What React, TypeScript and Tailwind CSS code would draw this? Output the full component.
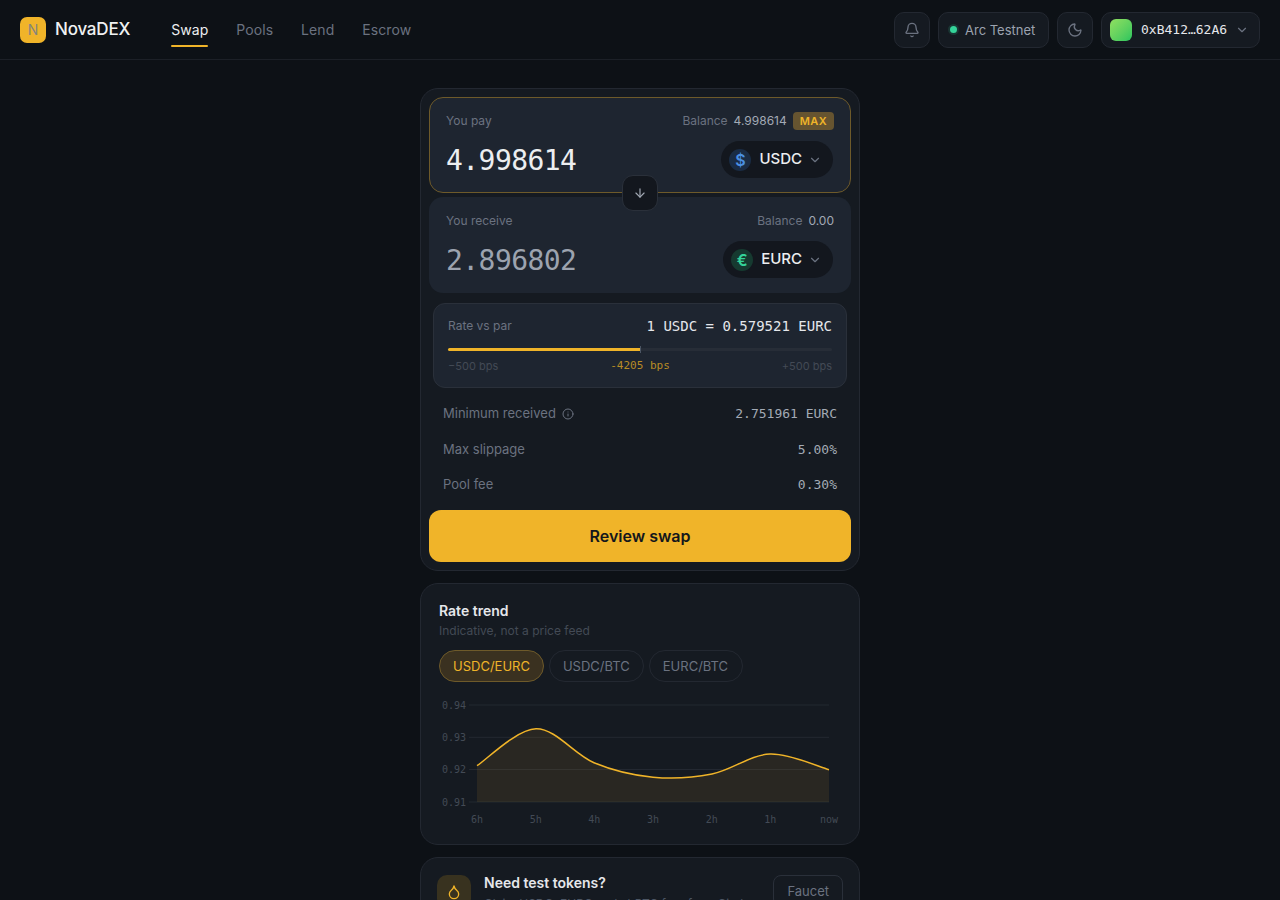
import { ArrowDown, Bell, ChevronDown, Droplet, Info, Moon } from "lucide-react";

const mono = "font-['DejaVu_Sans_Mono',monospace]";

const points: [number, number][] = [
  [38, 70.7],
  [97, 33.8],
  [155, 67.7],
  [214, 82.2],
  [273, 79],
  [331, 59],
  [390, 74.7],
];

function curve(pts: [number, number][]) {
  let d = `M${pts[0][0]},${pts[0][1]}`;
  for (let i = 0; i < pts.length - 1; i++) {
    const p0 = pts[i - 1] ?? pts[i];
    const p1 = pts[i];
    const p2 = pts[i + 1];
    const p3 = pts[i + 2] ?? p2;
    d += ` C${p1[0] + (p2[0] - p0[0]) / 6},${p1[1] + (p2[1] - p0[1]) / 6} ${p2[0] - (p3[0] - p1[0]) / 6},${p2[1] - (p3[1] - p1[1]) / 6} ${p2[0]},${p2[1]}`;
  }
  return d;
}

function Navbar() {
  return (
    <header className="h-[60px] flex items-center justify-between px-5 border-b border-[#1c2027]">
      <div className="flex items-center">
        <div className="w-[26px] h-[26px] rounded-[7px] bg-[#f0b429] flex items-center justify-center text-[14px] text-[#85847c]">
          N
        </div>
        <span className="ml-[9px] text-[17px] font-medium tracking-[-0.2px] text-[#f0f1f2]">NovaDEX</span>
        <nav className="ml-[41px] flex items-center gap-7 text-[14px] tracking-[0.07px] text-[#6b7280]">
          <a className="relative text-[#eceef0]">
            Swap
            <span className="absolute left-0 right-0 -bottom-[7px] h-[2px] rounded-full bg-[#f0b429]" />
          </a>
          <a>Pools</a>
          <a>Lend</a>
          <a>Escrow</a>
        </nav>
      </div>
      <div className="flex items-center gap-2">
        <button className="w-9 h-9 rounded-[10px] border border-[#232831] bg-[#151a21] flex items-center justify-center text-[#6b7280]">
          <Bell size={16} />
        </button>
        <div className="h-9 w-[111px] rounded-[10px] border border-[#232831] bg-[#151a21] flex items-center pl-[11px] text-[13px] leading-[20px] text-[#9ca3af]">
          <span className="w-[7px] h-[7px] rounded-full bg-[#34d399] ring-[2px] ring-[#34d399]/15" />
          <span className="ml-[8px]">Arc Testnet</span>
        </div>
        <button className="w-9 h-9 rounded-[10px] border border-[#232831] bg-[#151a21] flex items-center justify-center text-[#6b7280]">
          <Moon size={16} />
        </button>
        <div className="h-9 w-[159px] rounded-[10px] border border-[#232831] bg-[#151a21] flex items-center pl-2">
          <span className="w-[22px] h-[22px] rounded-[6px] bg-gradient-to-br from-[#8fe060] to-[#22c55e]" />
          <span className={`ml-[9px] text-[13px] text-[#e5e7eb] ${mono}`}>0xB412…62A6</span>
          <ChevronDown size={14} className="ml-[8px] text-[#6b7280]" />
        </div>
      </div>
    </header>
  );
}

function TokenPicker({ symbol, glyph, circle, text }: { symbol: string; glyph: string; circle: string; text: string }) {
  return (
    <div className="h-[37px] mr-px rounded-full bg-[#13171e] flex items-center pl-2 pr-[11px]">
      <span className={`w-[22px] h-[22px] rounded-full flex items-center justify-center text-[16px] font-semibold ${circle} ${text}`}>
        {glyph}
      </span>
      <span className="ml-2 text-[15px] font-medium text-[#eceef0]">{symbol}</span>
      <ChevronDown size={14} className="ml-[6px] text-[#6b7280]" />
    </div>
  );
}

function DetailRow({ label, value, info }: { label: string; value: string; info?: boolean }) {
  return (
    <div className="flex items-center justify-between">
      <span className="flex items-center gap-[6px] text-[13px] text-[#6b7280]">
        {label}
        {info && <Info size={12} />}
      </span>
      <span className={`text-[13px] text-[#a3aab5] ${mono}`}>{value}</span>
    </div>
  );
}

function SwapCard() {
  return (
    <section className="rounded-[18px] border border-[#232831] bg-[#151a21] p-2 h-[483px]">
      <div className="relative">
        <div className="h-[96px] rounded-[14px] border border-[#6e5a2a] bg-[#1e2530] px-4 pt-[14px]">
          <div className="flex items-center justify-between h-[18px]">
            <span className="text-[12px] text-[#6b7280]">You pay</span>
            <div className="flex items-center text-[12px]">
              <span className="text-[#6b7280]">Balance</span>
              <span className="ml-[6px] text-[#a3aab5]">4.998614</span>
              <span className="ml-[6px] h-[18px] px-[7px] rounded-[4px] bg-[#665430] text-[#f0b429] text-[11px] font-semibold tracking-[0.4px] flex items-center">
                MAX
              </span>
            </div>
          </div>
          <div className="flex items-center justify-between mt-[11px]">
            <span className={`text-[28px] leading-[37px] tracking-[-0.56px] translate-y-px text-[#eceef0] ${mono}`}>4.998614</span>
            <TokenPicker symbol="USDC" glyph="$" circle="bg-[#1a2c44]" text="text-[#4a90e2]" />
          </div>
        </div>
        <button className="absolute z-10 left-1/2 -translate-x-1/2 top-[78px] w-9 h-9 rounded-[11px] border border-[#2a303a] bg-[#13171e] flex items-center justify-center text-[#a3aab5]">
          <ArrowDown size={14} />
        </button>
        <div className="mt-1 h-[96px] rounded-[14px] bg-[#1e2530] px-[17px] pt-[15px]">
          <div className="flex items-center justify-between h-[18px]">
            <span className="text-[12px] text-[#6b7280]">You receive</span>
            <div className="flex items-center text-[12px]">
              <span className="text-[#6b7280]">Balance</span>
              <span className="ml-[6px] text-[#a3aab5]">0.00</span>
            </div>
          </div>
          <div className="flex items-center justify-between mt-[11px]">
            <span className={`text-[28px] leading-[37px] tracking-[-0.56px] translate-y-px text-[#9ca3af] ${mono}`}>2.896802</span>
            <TokenPicker symbol="EURC" glyph="€" circle="bg-[#163a30]" text="text-[#34d399]" />
          </div>
        </div>
      </div>

      <div className="mx-1 mt-[10px] h-[85px] rounded-[12px] border border-[#2a303a] bg-[#1e2530] px-[14px] pt-[12px]">
        <div className="flex items-center justify-between h-[20px]">
          <span className="text-[12px] leading-[20px] text-[#6b7280]">Rate vs par</span>
          <span className={`text-[14px] text-[#e5e7eb] ${mono}`}>1 USDC = 0.579521 EURC</span>
        </div>
        <div className="relative mt-[12px] h-[3px] rounded-full bg-[#272d37]">
          <div className="h-[3px] w-1/2 rounded-l-full bg-[#f0b429]" />
          <span className="absolute left-1/2 -top-[2px] h-[7px] w-px bg-[#4b5563]" />
        </div>
        <div className="flex items-center justify-between mt-[7px] text-[11px] text-[#434a55]">
          <span>−500 bps</span>
          <span className={`text-[11px] text-[#b98c25] ${mono}`}>-4205 bps</span>
          <span>+500 bps</span>
        </div>
      </div>

      <div className="mt-4 mx-[14px] flex flex-col gap-4">
        <DetailRow label="Minimum received" value="2.751961 EURC" info />
        <DetailRow label="Max slippage" value="5.00%" />
        <DetailRow label="Pool fee" value="0.30%" />
      </div>

      <button className="mt-[15.5px] w-full h-[52px] rounded-[12px] bg-[#f0b429] text-[16px] font-semibold text-[#14171c]">
        Review swap
      </button>
    </section>
  );
}

function RateTrend() {
  const line = curve(points);
  const rows = [
    { y: 10, label: "0.94" },
    { y: 42.3, label: "0.93" },
    { y: 74.5, label: "0.92" },
    { y: 107, label: "0.91" },
  ];
  const ticks = ["6h", "5h", "4h", "3h", "2h", "1h", "now"];
  return (
    <section className="mt-3 h-[262px] rounded-[18px] border border-[#232831] bg-[#151a21] px-[18px] pt-[17px]">
      <h2 className="text-[14px] leading-[20px] font-semibold text-[#e5e7eb]">Rate trend</h2>
      <p className="text-[12px] leading-[18px] mt-[1px] text-[#434a55]">Indicative, not a price feed</p>
      <div className="mt-[10px] flex gap-[5px] text-[13px] leading-[20px] text-[#6b7280]">
        <span className="h-8 px-[13px] rounded-full border border-[#6e5a2a] bg-[#3a3120] text-[#f0b429] flex items-center">USDC/EURC</span>
        <span className="h-8 px-[13px] rounded-full border border-[#232831] flex items-center">USDC/BTC</span>
        <span className="h-8 pl-[13px] pr-[14px] rounded-full border border-[#232831] flex items-center">EURC/BTC</span>
      </div>
      <svg width="402" height="135" className="mt-[13px] block" style={{ fontFamily: "DejaVu Sans Mono, monospace" }}>
        {rows.map((r) => (
          <g key={r.label}>
            <line x1="30" x2="390" y1={r.y} y2={r.y} stroke="#232831" strokeWidth="1" />
            <text x="27" y={r.y + 3.5} textAnchor="end" fontSize="10" fill="#434a55">
              {r.label}
            </text>
          </g>
        ))}
        <path d={`${line} L390,107 L38,107 Z`} fill="#f0b429" fillOpacity="0.09" />
        <path d={line} fill="none" stroke="#f0b429" strokeWidth="1.5" />
        {ticks.map((t, i) => (
          <text key={t} x={38 + i * 58.67} y="127.5" textAnchor="middle" fontSize="10" fill="#434a55">
            {t}
          </text>
        ))}
      </svg>
    </section>
  );
}

function FaucetCard() {
  return (
    <section className="mt-3 rounded-[18px] border border-[#232831] bg-[#151a21] px-4 py-[17px] flex items-start">
      <div className="w-[34px] h-[34px] rounded-[10px] bg-[#38321f] flex items-center justify-center text-[#f0b429] shrink-0">
        <Droplet size={16} />
      </div>
      <div className="ml-[13px] flex-1">
        <h3 className="text-[14px] leading-[18px] -mt-[1px] font-semibold text-[#e5e7eb]">Need test tokens?</h3>
        <p className="text-[12px] leading-[18px] mt-[3px] text-[#4b5563]">Claim USDC, EURC and cbBTC free from Circle</p>
      </div>
      <button className="h-8 px-[13px] rounded-[8px] border border-[#2a303a] text-[13px] leading-[20px] text-[#6b7280]">Faucet</button>
    </section>
  );
}

export default function App() {
  return (
    <div className="min-h-screen bg-[#0d1116] font-['Inter',sans-serif]">
      <Navbar />
      <main className="w-[440px] mx-auto pt-7 pb-10">
        <SwapCard />
        <RateTrend />
        <FaucetCard />
      </main>
    </div>
  );
}
